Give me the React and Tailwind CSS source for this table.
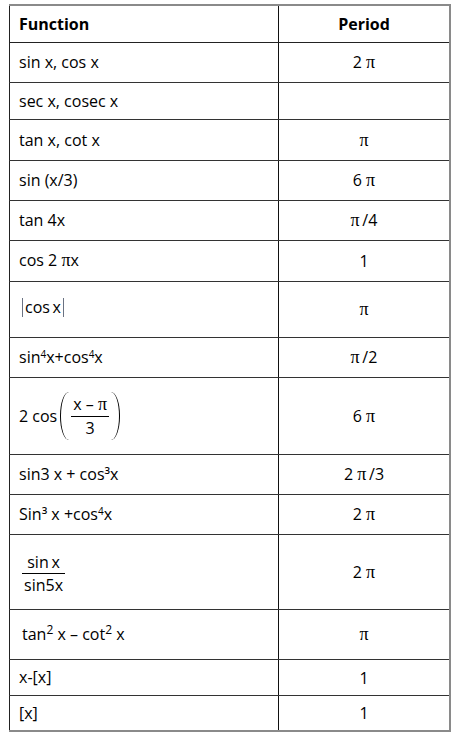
import React from 'react';

const font = { fontFamily: '"Open Sans", "Noto Sans", sans-serif' };

function Pi() {
  return <span style={{ fontFamily: '"Liberation Serif", "DejaVu Serif", serif' }} className="text-[18px]">π</span>;
}

function Sup({ children, className = 'text-[10px]' }) {
  return <sup className={`${className} leading-none`}>{children}</sup>;
}

function Frac({ top, bottom, className = '' }) {
  return (
    <span className={`inline-flex flex-col items-center leading-none ${className}`}>
      <span className="px-[2px] pb-[3px]">{top}</span>
      <span className="self-stretch border-t border-black" />
      <span className="px-[2px] pt-[3px]">{bottom}</span>
    </span>
  );
}

const rows = [
  { h: 40, fn: 'sin x, cos x', p: <>2 <Pi /></> },
  { h: 37, fn: 'sec x, cosec x', p: '' },
  { h: 41, fn: 'tan x, cot x', p: <Pi /> },
  { h: 40, fn: 'sin (x/3)', p: <>6 <Pi /></> },
  { h: 40, fn: 'tan 4x', p: <><Pi />{'\u2009'}/4</> },
  { h: 41, fn: <>cos 2 <Pi />x</>, p: '1' },
  {
    h: 56,
    fn: (
      <span className="inline-flex items-center pl-[3px]">
        <span className="w-px h-[19px] bg-gray-500" />
        <span className="px-[2px]">cos{'\u2009'}x</span>
        <span className="w-px h-[19px] bg-gray-500" />
      </span>
    ),
    p: <Pi />,
  },
  { h: 40, fn: <>sin<Sup>4</Sup>x+cos<Sup>4</Sup>x</>, p: <><Pi />{'\u2009'}/2</> },
  {
    h: 77,
    fn: (
      <span className="inline-flex items-center">
        <span>2 cos</span>
        <span className="ml-[3px] w-[9px] h-[48px] border-l-[1.5px] border-black rounded-l-[100%_50%]" />
        <Frac top={<>x – <Pi /></>} bottom="3" className="mx-[2px]" />
        <span className="w-[9px] h-[48px] border-r-[1.5px] border-black rounded-r-[100%_50%]" />
      </span>
    ),
    p: <>6 <Pi /></>,
  },
  { h: 40, fn: <>sin3 x + cos³x</>, p: <>2 <Pi />{'\u2009'}/3</> },
  { h: 40, fn: <>Sin³ x +cos<Sup>4</Sup>x</>, p: <>2 <Pi /></> },
  { h: 75, fn: <Frac top={<>sin{'\u2009'}x</>} bottom="sin5x" className="ml-[3px]" />, p: <>2 <Pi /></> },
  {
    h: 50,
    fn: (
      <span className="pl-[3px]">
        tan<Sup className="text-[12px]">2</Sup> x – cot<Sup className="text-[12px]">2</Sup> x
      </span>
    ),
    p: <Pi />,
  },
  { h: 36, fn: 'x-[x]', p: '1' },
  { h: 36, fn: '[x]', p: '1' },
];

export default function App() {
  return (
    <div className="bg-white pt-[4px] pl-[9px] pb-[7px]" style={font}>
      <table className="border-collapse w-[442px] text-[16px] text-black">
        <thead>
          <tr className="h-[37px]">
            <th className="w-[269px] text-left font-bold pl-[9px] border-l border-l-[#222] border-t-2 border-t-[#8a8a8a] border-b border-b-[#222] border-r border-r-[#111]">
              Function
            </th>
            <th className="text-center font-bold border-t-2 border-t-[#8a8a8a] border-r-2 border-r-[#8a8a8a] border-b border-b-[#222]">
              Period
            </th>
          </tr>
        </thead>
        <tbody>
          {rows.map((r, i) => {
            const last = i === rows.length - 1;
            return (
              <tr key={i} style={{ height: r.h }}>
                <td
                  className={`pl-[9px] align-middle border-l border-l-[#222] border-r border-r-[#111] ${
                    last ? 'border-b-2 border-b-[#8a8a8a]' : 'border-b border-b-[#333]'
                  }`}
                >
                  {r.fn}
                </td>
                <td
                  className={`text-center align-middle pt-[1px] border-r-2 border-r-[#8a8a8a] ${
                    last ? 'border-b-2 border-b-[#8a8a8a]' : 'border-b border-b-[#333]'
                  }`}
                >
                  {r.p}
                </td>
              </tr>
            );
          })}
        </tbody>
      </table>
    </div>
  );
}
